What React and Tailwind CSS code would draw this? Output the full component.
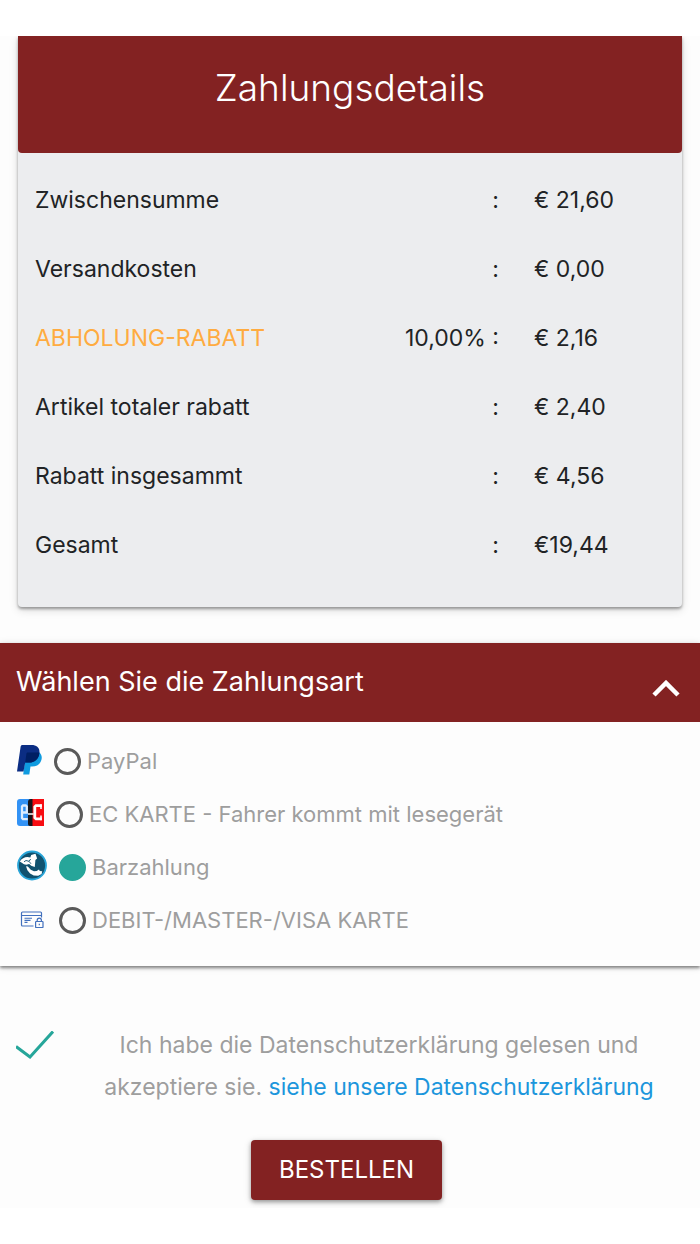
import { useState } from "react";

const rows = [
  { label: "Zwischensumme", sep: ":", value: "€ 21,60" },
  { label: "Versandkosten", sep: ":", value: "€ 0,00" },
  { label: "ABHOLUNG-RABATT", sep: "10,00% :", value: "€ 2,16", accent: true },
  { label: "Artikel totaler rabatt", sep: ":", value: "€ 2,40" },
  { label: "Rabatt insgesammt", sep: ":", value: "€ 4,56" },
  { label: "Gesamt", sep: ":", value: "€19,44" },
];

function PayPalIcon() {
  return (
    <svg className="mb-1 h-[30px] w-[25px] shrink-0" viewBox="0 0 25 30" aria-hidden="true">
      <path d="M9 7.500h13.500c2.200 2 2.600 4.600 2 7-1.200 5-4.700 7-9.500 7h-1.500L12.300 29.500H6.200z" fill="#0f9be0" />
      <path d="M5.500 0H14.500c5.500 0 8.700 3 7.800 8.200C21.300 14 17.500 17.500 12 17.500H8.200L6.500 26.500H0L3.600 1.800C3.800.6 4.500 0 5.500 0z" fill="#0b2d83" />
      <path d="M10.600 7.400H22.400c0 5.800-4.200 10.100-10.400 10.100H8.200l1.200-8.600c.1-1 .5-1.500 1.200-1.500z" fill="#001f63" />
    </svg>
  );
}

function EcIcon() {
  return (
    <svg className="mb-1 h-[27px] w-[27px] shrink-0" viewBox="0 0 27 27" aria-hidden="true">
      <path d="M3 0h11v27H3a3 3 0 0 1-3-3V3a3 3 0 0 1 3-3z" fill="#3292f5" />
      <path d="M14 0h2v27h-3a2 2 0 0 1-2-2V3a3 3 0 0 1 3-3z" fill="#15151c" />
      <path d="M15.500 0H27v27H15.500z" fill="#f70d12" />
      <path d="M6 13.500h3.800V7.500L8.800 6.500H6L5 7.500V19l1 1.200h4.800" fill="none" stroke="#dcecff" strokeWidth="2.300" />
      <path d="M11 15h5.500" fill="none" stroke="#fff" strokeWidth="1.500" />
      <path d="M24.800 6.600H19l-1.200 1.200v10.900l1.200 1.200h5.800" fill="none" stroke="#fff" strokeWidth="2.800" />
      <path d="M24 5.200v4.800M24 16.500v4.800" fill="none" stroke="#fff" strokeWidth="1.600" />
    </svg>
  );
}

function CashIcon() {
  return (
    <svg className="mb-1 h-[31px] w-[30px] shrink-0" viewBox="0 0 30 31" aria-hidden="true">
      <circle cx="15" cy="15.500" r="14" fill="#11526f" stroke="#29a5d8" strokeWidth="1.800" />
      <path d="M2.800 11.500C4.500 8.500 7.500 7 10.500 7l2.800.5.900-2.500 4.300-1.200 1.600 4.700-1.700 1.600-.6 7-3.600-1.300-2-1.800-3 .8-2.200-.6z" fill="#fff" />
      <path d="M7 11.800l2-1.300 3 .8 1.700-2.300M12 11.300l2 2.500" fill="none" stroke="#11526f" strokeWidth="0.900" />
      <path d="M9 16.200l1.800.2 3 3.400 3.200 1.400 2.700-.3 2.300-1.300.8 1.300 2.400.3-.6 2.700-3.400 1.900-4.500-.2-3.600-2-2.700-3.400z" fill="#fff" />
    </svg>
  );
}

function CardLockIcon() {
  return (
    <svg className="mb-1 h-[30px] w-[30px] shrink-0" viewBox="0 -1 30 30" fill="none" stroke="#4270bd" strokeWidth="1.200" aria-hidden="true">
      <path d="M16.500 21H5.500a1 1 0 0 1-1-1V8a1 1 0 0 1 1-1h18a1 1 0 0 1 1 1v4.500M4.500 10.500h20" />
      <path d="M7.500 13.200h7.500M7.500 15.400h6M7.500 17.400h3" strokeWidth="1.100" />
      <rect x="18.600" y="16.500" width="7.400" height="6" rx=".6" />
      <path d="M20.200 16.500v-1.300a2.100 2.100 0 0 1 4.200 0v1.300M22.300 18.800v1.500" />
    </svg>
  );
}

const methods = [
  { id: "paypal", label: "PayPal", Icon: PayPalIcon },
  { id: "ec", label: "EC KARTE - Fahrer kommt mit lesegerät", Icon: EcIcon },
  { id: "bar", label: "Barzahlung", Icon: CashIcon },
  { id: "card", label: "DEBIT-/MASTER-/VISA KARTE", Icon: CardLockIcon },
];

export default function App() {
  const [method, setMethod] = useState("bar");
  const [open, setOpen] = useState(true);
  const [accepted, setAccepted] = useState(true);

  return (
    <div className="bg-white py-9 font-['Inter',sans-serif] text-[23px] text-[#212325]">
      <main className="overflow-hidden bg-[#fdfdfd] pb-2">
        <section className="mx-[18px] rounded-b bg-[#ecedef] pb-[27px] shadow-[0_2px_3px_rgba(0,0,0,0.35),0_3px_10px_rgba(0,0,0,0.14)]">
          <h1 className="rounded-b bg-[#832222] pt-6 pb-[37px] text-center text-[37px] leading-[56px] font-light text-white">
            Zahlungsdetails
          </h1>
          <div className="px-[17px] pt-[13px]">
            <table className="w-full table-fixed">
              <tbody>
                {rows.map((r) => (
                  <tr key={r.label} className="h-[69px]">
                    <th scope="row" className={`w-[50%] text-left font-normal ${r.accent ? "text-[#ffab40]" : ""}`}>
                      {r.label}
                    </th>
                    <td className="text-right">{r.sep}</td>
                    <td className="w-[166px] pl-[35px]">{r.value}</td>
                  </tr>
                ))}
              </tbody>
            </table>
          </div>
        </section>

        <section className="mt-9 bg-[#fdfdfd] shadow-[0_2px_3px_rgba(0,0,0,0.45),0_1px_8px_rgba(0,0,0,0.12)]">
          <h2>
            <button
              type="button"
              aria-expanded={open}
              onClick={() => setOpen(!open)}
              className="flex h-[79px] w-full items-center justify-between bg-[#832222] pr-5 pl-4 text-left text-[27px] text-white"
            >
              Wählen Sie die Zahlungsart
              <svg className="mt-3 h-[17px] w-7" viewBox="0 0 28 17" fill="none" stroke="#fff" strokeWidth="4.500" aria-hidden="true">
                <path d="M2 15L14 3L26 15" />
              </svg>
            </button>
          </h2>
          {open && (
            <div className="flex flex-col items-start px-[17px] pt-[13px] pb-[19px]">
              {methods.map(({ id, label, Icon }) => (
                <label key={id} className="flex h-[53px] items-center text-[22px] text-[#9e9e9e]">
                  <Icon />
                  <input
                    type="radio"
                    name="payment"
                    value={id}
                    checked={method === id}
                    onChange={() => setMethod(id)}
                    className="mr-1.5 ml-3 size-[27px] shrink-0 appearance-none rounded-full border-[3px] border-[#5a5a5a] checked:border-[#26a69a] checked:bg-[#26a69a]"
                  />
                  {label}
                </label>
              ))}
            </div>
          )}
        </section>

        <div className="mt-[58px] flex items-start pr-[18px] pl-4">
          <label htmlFor="privacy" className="grid h-[42px] w-[60px] shrink-0 items-center">
            <input
              id="privacy"
              type="checkbox"
              checked={accepted}
              onChange={() => setAccepted(!accepted)}
              aria-label="Datenschutzerklärung akzeptieren"
              className="peer col-start-1 row-start-1 size-9 appearance-none border-2 border-[#5a5a5a] checked:border-transparent"
            />
            <svg className="invisible col-start-1 row-start-1 h-7 w-[38px] peer-checked:visible" viewBox="0 0 38 28" fill="none" stroke="#26a69a" strokeWidth="3" aria-hidden="true">
              <path d="M0 15.500L14 26L37 0.500" />
            </svg>
          </label>
          <p className="flex-1 text-center leading-[42px] text-[#9e9e9e]">
            Ich habe die Datenschutzerklärung gelesen und akzeptiere sie.{" "}
            <a href="#datenschutz" className="text-[#1c96dc]">
              siehe unsere Datenschutzerklärung
            </a>
          </p>
        </div>

        <div className="mt-8 flex justify-center pr-[7px]">
          <button
            type="button"
            className="h-[60px] rounded bg-[#832222] px-7 text-[24px] text-white shadow-[0_2px_4px_rgba(0,0,0,0.35),0_2px_8px_rgba(0,0,0,0.12)]"
          >
            BESTELLEN
          </button>
        </div>
      </main>
    </div>
  );
}
